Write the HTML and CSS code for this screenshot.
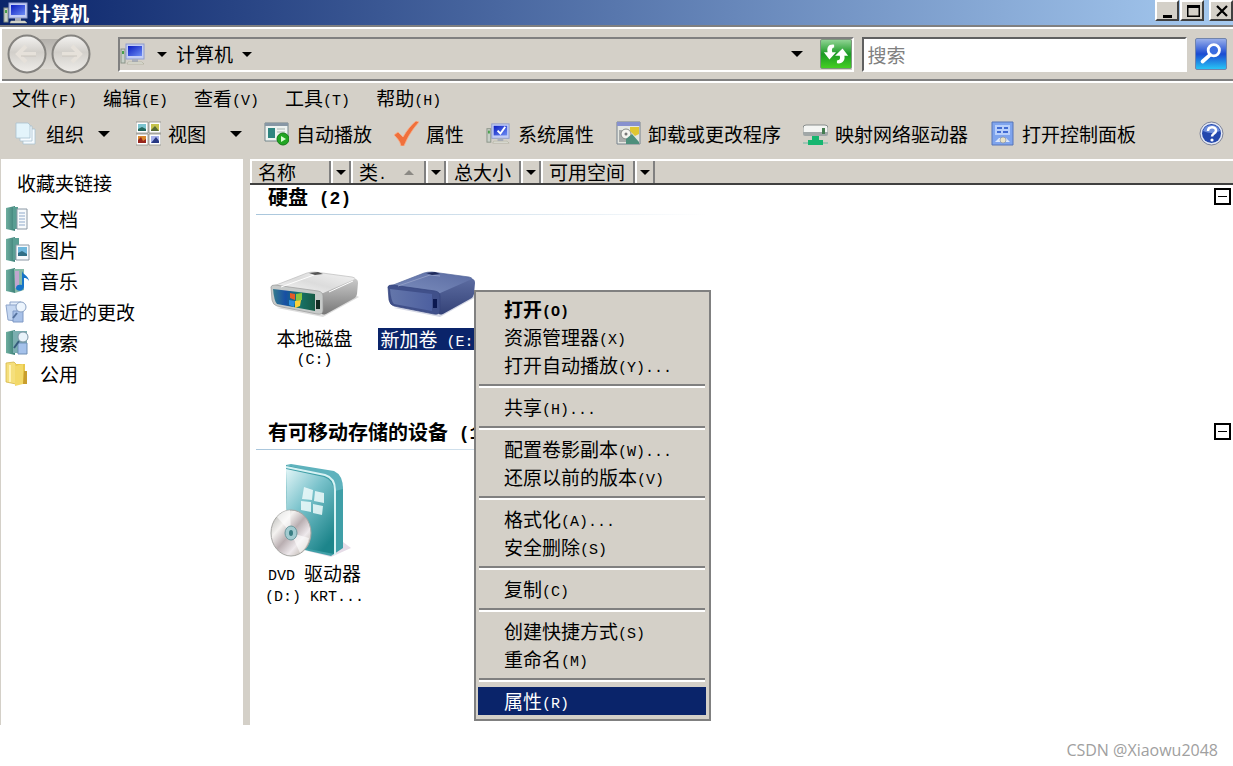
FILE: index.html
```html
<!DOCTYPE html>
<html lang="zh-CN">
<head>
    <meta charset="UTF-8">
    <meta name="viewport" content="width=device-width, initial-scale=1.0">
    <title>计算机</title>
    <link rel="stylesheet" href="styles.css">
</head>
<body>
    <svg class="defs" width="0" height="0" aria-hidden="true">
        <defs>
            <linearGradient id="screen" x1="0" y1="0" x2="1" y2="1">
                <stop offset="0" stop-color="#0a1cc0"/>
                <stop offset="1" stop-color="#6c8cf4"/>
            </linearGradient>
            <linearGradient id="book" x1="0" y1="0" x2="1" y2="0">
                <stop offset="0" stop-color="#6fae9f"/>
                <stop offset="1" stop-color="#3c8078"/>
            </linearGradient>
            <linearGradient id="ball" x1="0" y1="0" x2="0" y2="1">
                <stop offset="0" stop-color="#f4f3f1"/>
                <stop offset="0.45" stop-color="#d2cfca"/>
                <stop offset="1" stop-color="#efedea"/>
            </linearGradient>
        </defs>
        <symbol id="computer" viewBox="0 0 26 24">
            <rect x="1" y="7" width="4" height="14" fill="#c8d0c8" stroke="#8a9488"/>
            <rect x="2" y="9" width="2" height="3" fill="#49a04c"/>
            <rect x="6" y="2" width="18" height="15" fill="#c3cdf5" stroke="#8f9ccb"/>
            <rect x="8" y="4" width="14" height="10" fill="url(#screen)"/>
            <path d="M12 17h6v3h-6z" fill="#a7adbc"/>
            <path d="M8 20h14l2 2H7z" fill="#e4e6df" stroke="#a8a894" stroke-width=".6"/>
        </symbol>
        <symbol id="arrow" viewBox="0 0 12 6">
            <path d="M0 0h12L6 6z" fill="#000"/>
        </symbol>
    </svg>

    <div class="window">
        <div class="titlebar">
            <svg class="title-icon" viewBox="0 0 26 24"><use href="#computer"/></svg>
            <h1>计算机</h1>
            <div class="title-buttons">
                <button aria-label="最小化"><svg viewBox="0 0 16 16"><path d="M3 12h9v3H3z"/></svg></button>
                <button aria-label="最大化"><svg viewBox="0 0 16 16"><path d="M2 2h13v12H2zM3.500 5v7.500h10V5z" fill-rule="evenodd"/></svg></button>
                <button class="close" aria-label="关闭"><svg viewBox="0 0 16 16"><path d="M3 3l10 10M13 3L3 13" stroke="#000" stroke-width="2.200"/></svg></button>
            </div>
        </div>

        <div class="navbar">
            <div class="history">
                <button aria-label="后退"><svg viewBox="0 0 40 40"><circle cx="20" cy="20" r="18.500" fill="url(#ball)" stroke="#85837f" stroke-width="2"/><path d="M29 20H12M19 12l-8 8 8 8" fill="none" stroke="#e6e1da" stroke-width="4"/><path d="M29 22H14" stroke="#c9c4bd"/></svg></button>
                <button aria-label="前进"><svg viewBox="0 0 40 40"><circle cx="20" cy="20" r="18.500" fill="url(#ball)" stroke="#85837f" stroke-width="2"/><path d="M11 20h17M21 12l8 8-8 8" fill="none" stroke="#e6e1da" stroke-width="4"/><path d="M11 22h15" stroke="#c9c4bd"/></svg></button>
            </div>
            <div class="address">
                <svg class="small-icon" viewBox="0 0 26 24"><use href="#computer"/></svg>
                <svg class="tiny-arrow"><use href="#arrow"/></svg>
                <span>计算机</span>
                <svg class="tiny-arrow"><use href="#arrow"/></svg>
                <svg class="arrow address-drop"><use href="#arrow"/></svg>
                <button class="refresh" aria-label="刷新">
                    <svg viewBox="0 0 32 30">
                        <path d="M14 5C8 4 6 8 7 13H3l6 8 7-8h-4c-1-3 0-5 2-5z" fill="#fff"/>
                        <path d="M17 25c6 1 9-3 8-8h4l-6-8-8 8h5c1 3 0 5-3 5z" fill="#fff"/>
                    </svg>
                </button>
            </div>
            <input class="search" type="text" placeholder="搜索" aria-label="搜索">
            <button class="go" aria-label="开始搜索">
                <svg viewBox="0 0 32 32"><circle cx="19" cy="12" r="6" fill="#3b6de0" stroke="#fff" stroke-width="3"/><path d="M15 17l-8 7" stroke="#fff" stroke-width="4" stroke-linecap="round"/></svg>
            </button>
        </div>

        <div class="menubar">
            <button>文件<span class="en">(F)</span></button>
            <button>编辑<span class="en">(E)</span></button>
            <button>查看<span class="en">(V)</span></button>
            <button>工具<span class="en">(T)</span></button>
            <button>帮助<span class="en">(H)</span></button>
        </div>

        <div class="toolbar">
            <button>
                <svg class="icon" viewBox="0 0 25 25"><g fill="#f5fbff" stroke="#a9c3d0" stroke-width=".8"><path d="M9 8h12v15H9z"/><path d="M6 5h12v15H6z"/><path d="M2 2h12l2 2v13H2z" fill="#e3f4fb"/></g></svg>
                组织
                <svg class="arrow"><use href="#arrow"/></svg>
            </button>
            <button class="views">
                <svg class="icon" viewBox="0 0 25 25"><path d="M0 1h12v11H0zM13 1h12v11H13zM0 13h12v11H0zM13 13h12v11H13z" fill="#fff" stroke="#8d8d86" stroke-width=".8"/><path d="M2 3h8v7H2z" fill="#7cc4cf"/><path d="M2 8l4-2 4 2v2H2z" fill="#24685c"/><path d="M15 3h8v7h-8z" fill="#c5c34c"/><path d="M15 9l4-4 4 5h-8z" fill="#566a34"/><path d="M2 15h8v7H2z" fill="#d9892f"/><path d="M2 19l3-3 2 4 3-2v4H2z" fill="#97261d"/><path d="M15 15h8v7h-8z" fill="#a8b2ea"/><path d="M15 22l5-6 3 4v2z" fill="#283883"/></svg>
                视图
                <svg class="arrow"><use href="#arrow"/></svg>
            </button>
            <button>
                <svg class="icon" viewBox="0 0 25 25"><path d="M1 2h23v18H1z" fill="#eef3f1" stroke="#72858a"/><path d="M1 2h23v3H1z" fill="#8797a5"/><path d="M4 7h7v10H4z" fill="#2f8580"/><path d="M13 8h8M13 11h8" stroke="#a8b5b0"/><circle cx="19" cy="18" r="6" fill="#21a522" stroke="#137a17"/><path d="M17 15l5 3-5 3z" fill="#d8ffd0"/></svg>
                自动播放
            </button>
            <button>
                <svg class="icon" viewBox="0 0 25 25"><path d="M0 14l4-3 5 5C13 9 17 4 22 0l3 1C19 8 14 15 10 25H7C6 20 3 17 0 14z" fill="#f0703c" stroke="#f8b08c" stroke-width=".8"/></svg>
                属性
            </button>
            <button>
                <svg class="icon" viewBox="0 0 26 24"><use href="#computer"/><path d="M12 9l3 3 5-7" fill="none" stroke="#fff" stroke-width="2"/></svg>
                系统属性
            </button>
            <button>
                <svg class="icon" viewBox="0 0 25 25"><path d="M1 1h23v22H1z" fill="#e5e7e1" stroke="#76828d"/><path d="M1 1h23v4H1z" fill="#8791ce"/><path d="M3 9h9v12H3z" fill="#a9acab"/><circle cx="10" cy="13" r="5" fill="#f4f4ef" stroke="#868a86"/><circle cx="10" cy="13" r="1.500" fill="#777"/><path d="M14 6h9v7l-4 2-5-5z" fill="#dfc632"/><path d="M10 18l6-5 7 8v2H10z" fill="#4e8f7c"/></svg>
                卸载或更改程序
            </button>
            <button>
                <svg class="icon" viewBox="0 0 25 25"><path d="M0 7q0-3 3-3h19q3 0 3 3v5H0z" fill="#f4f5f3" stroke="#888d8c"/><path d="M0 11h25v2q0 2-2 2H2q-2 0-2-2z" fill="#a1a7a7"/><path d="M19 7h3v6h-3z" fill="#447d50"/><path d="M9 15h7v4h4v5H5v-5h4z" fill="#16b670"/><path d="M0 22h5M20 22h5" stroke="#9fc4b4" stroke-width="2"/></svg>
                映射网络驱动器
            </button>
            <button>
                <svg class="icon" viewBox="0 0 25 25"><path d="M2 1h21v23H2z" fill="#7fa4ed" stroke="#5675b8"/><path d="M5 4h15v10H5z" fill="#b9d0fb"/><path d="M7 6h5v2H7zM14 6h4v2h-4zM7 10h4v2H7zM13 10h5v2h-5z" fill="#416bd2"/><path d="M5 21l4-4h7l4 4z" fill="#dce7fb"/><circle cx="13" cy="19" r="3" fill="#e9e3c6" stroke="#8790a3" stroke-width=".7"/></svg>
                打开控制面板
            </button>
            <button class="help" aria-label="帮助">
                <svg class="icon" viewBox="0 0 25 25"><circle cx="12.500" cy="12.500" r="11.500" fill="#e3e8f5" stroke="#7c8298"/><circle cx="12.500" cy="12.500" r="9.500" fill="#2448ad"/><path d="M4 10a9 9 0 0 1 17 0q-8 4-17 0z" fill="#6f8fdc"/><path d="M9 10c0-5 8-5 8-.5 0 3-4 3-4 6" fill="none" stroke="#fff" stroke-width="2.500"/><circle cx="13" cy="19" r="1.600" fill="#fff"/></svg>
            </button>
        </div>

        <div class="content">
            <div class="sidebar">
                <h2>收藏夹链接</h2>
                <a href="#"><svg class="icon" viewBox="0 0 25 25"><path d="M1 2l9-2v25l-9-2z" fill="url(#book)"/><path d="M8 1h5v22H8z" fill="#599e93"/><path d="M12 3h10v20H12z" fill="#f7fafc" stroke="#8b98a4"/><path d="M14 7h6M14 10h6M14 13h6M14 16h6M14 19h6" stroke="#8fa9ca"/></svg>文档</a>
                <a href="#"><svg class="icon" viewBox="0 0 25 25"><path d="M1 2l9-2v25l-9-2z" fill="url(#book)"/><path d="M8 1h6v22H8z" fill="#599e93"/><path d="M11 8h13v15H11z" fill="#f7fafc" stroke="#8b98a4"/><path d="M13 10h9v9h-9z" fill="#6fb7dc"/><path d="M13 16l4-2 5 3v2h-9z" fill="#316f86"/></svg>图片</a>
                <a href="#"><svg class="icon" viewBox="0 0 25 25"><path d="M1 2l9-2v25l-9-2z" fill="url(#book)"/><path d="M9 1h10v21l-9 3z" fill="#87b9a7"/><path d="M10 3h4v17h-4z" fill="#c0a6ce"/><path d="M17 3c1 4 6 4 7 10-2-3-3-3-5-3v8c0 6-8 6-8 2 0-3 3-4 6-3z" fill="#1674c8"/></svg>音乐</a>
                <a href="#"><svg class="icon" viewBox="0 0 25 25"><path d="M5 3h11v16H5z" fill="#e4eefb" stroke="#8da4ca"/><path d="M1 6h11v16l-9-1z" fill="#c5d7f1" stroke="#8da4ca"/><path d="M8 12h10v11H8z" fill="#a8c1e8" stroke="#7f98c5"/><circle cx="16" cy="8" r="5" fill="#edf5fd" stroke="#8ba2c4"/><path d="M12 14l-4 5" stroke="#54719e" stroke-width="2"/></svg>最近的更改</a>
                <a href="#"><svg class="icon" viewBox="0 0 25 25"><path d="M1 2l9-2v25l-9-2z" fill="url(#book)"/><path d="M8 1h14v22H8z" fill="#7baeb0"/><path d="M13 13h9v11h-9z" fill="#a5c2eb" stroke="#6f8fb5"/><circle cx="18" cy="7" r="5" fill="#e9f3fa" stroke="#7d95a6"/><path d="M14 11l-5 7" stroke="#365b7c" stroke-width="2"/></svg>搜索</a>
                <a href="#"><svg class="icon" viewBox="0 0 25 25"><path d="M1 2l8-1 2 2v20l-10-2z" fill="#f5df7c" stroke="#d6b84a" stroke-width=".8"/><path d="M11 3h9v20h-9z" fill="#e8c84c"/><path d="M10 5l8-2v20l-8 2z" fill="#f3d969"/><path d="M19 10h3v13h-4z" fill="#c99e2d"/><path d="M5 4v17" stroke="#fff3b5" stroke-width="2"/></svg>公用</a>
            </div>

            <div class="main">
                <div class="columns">
                    <button class="col col-name">名称</button>
                    <button class="col-drop" aria-label="名称筛选"><svg><use href="#arrow"/></svg></button>
                    <button class="col col-type"><span>类<span class="en">.</span></span><svg viewBox="0 0 12 6"><path d="M0 6h12L6 0z" fill="#8b8984"/></svg></button>
                    <button class="col-drop" aria-label="类型筛选"><svg><use href="#arrow"/></svg></button>
                    <button class="col col-size">总大小</button>
                    <button class="col-drop" aria-label="总大小筛选"><svg><use href="#arrow"/></svg></button>
                    <button class="col col-free">可用空间</button>
                    <button class="col-drop" aria-label="可用空间筛选"><svg><use href="#arrow"/></svg></button>
                </div>

                <div class="group">
                    <div class="group-title">
                        <h3>硬盘<span class="en"> (2)</span></h3>
                        <button class="toggle" aria-label="折叠"></button>
                    </div>
                    <div class="drives disks">
                        <div class="drive">
                            <svg class="disk" viewBox="0 0 92 50">
                                <defs>
                                    <linearGradient id="top1" x1="0" y1="1" x2="1" y2="0"><stop offset="0" stop-color="#fafafa"/><stop offset=".5" stop-color="#dcdcdc"/><stop offset="1" stop-color="#f4f4f4"/></linearGradient>
                                    <linearGradient id="side1" x1="0" y1="0" x2="0" y2="1"><stop offset="0" stop-color="#c9c9c9"/><stop offset="1" stop-color="#777"/></linearGradient>
                                    <linearGradient id="face1" x1="0" y1="0" x2="1" y2="0"><stop offset="0" stop-color="#337a8c"/><stop offset=".3" stop-color="#174fa4"/><stop offset=".6" stop-color="#16756c"/><stop offset="1" stop-color="#175b45"/></linearGradient>
                                </defs>
                                <path d="M8 38l46 9 36-20-8-4z" fill="#ddd"/>
                                <path d="M2 17L38 3q3-1 8-1l37 5q5 1 3 5L54 24 4 20z" fill="url(#top1)" stroke="#bbb" stroke-width=".7"/>
                                <path d="M52 24L86 9q3 0 3 4l-1 11q-1 4-4 5L57 44q-5 2-5-3z" fill="url(#side1)"/>
                                <path d="M2 17q0-2 4-2l43 6q5 1 5 5v14q0 5-6 4L8 36q-4-1-5-6z" fill="#c7cac9" stroke="#999" stroke-width=".7"/>
                                <path d="M4 19l42 5v17L8 34q-3-3-4-15z" fill="url(#face1)"/>
                                <path d="M21 23l5 1v6l-5-2z" fill="#e45a28"/><path d="M27 24l6-1v7l-6 1z" fill="#8bc53f"/><path d="M20 30l6 1-1 6-5-2z" fill="#2c8edc"/><path d="M26 31l6-1-1 6-5 2z" fill="#fbd23a"/>
                                <path d="M47 30h4v9h-4z" fill="#142b22"/>
                                <path d="M12 17L45 5M60 22l24-11" stroke="#fff" stroke-width="1"/>
                                <path d="M40 3l9-1 5 2-8 1z" fill="#555"/>
                            </svg>
                            <span class="label">本地磁盘<br><span class="en">(C:)</span></span>
                        </div>
                        <div class="drive selected">
                            <svg class="disk" viewBox="0 0 92 50">
                                <defs>
                                    <linearGradient id="top2" x1="0" y1="1" x2="1" y2="0"><stop offset="0" stop-color="#7d8fbe"/><stop offset="1" stop-color="#5a6ba2"/></linearGradient>
                                    <linearGradient id="side2" x1="0" y1="0" x2="0" y2="1"><stop offset="0" stop-color="#5b6ba0"/><stop offset="1" stop-color="#344277"/></linearGradient>
                                    <linearGradient id="face2" x1="0" y1="0" x2="1" y2="0"><stop offset="0" stop-color="#6476aa"/><stop offset="1" stop-color="#4d60a0"/></linearGradient>
                                </defs>
                                <path d="M8 38l46 9 36-20-8-4z" fill="#d5d8e5"/>
                                <path d="M2 17L38 3q3-1 8-1l37 5q5 1 3 5L54 24 4 20z" fill="url(#top2)" stroke="#53659a" stroke-width=".7"/>
                                <path d="M52 24L86 9q3 0 3 4l-1 11q-1 4-4 5L57 44q-5 2-5-3z" fill="url(#side2)"/>
                                <path d="M2 17q0-2 4-2l43 6q5 1 5 5v14q0 5-6 4L8 36q-4-1-5-6z" fill="#40508a" stroke="#34447c" stroke-width=".7"/>
                                <path d="M4 19l42 5v17L8 34q-3-3-4-15z" fill="url(#face2)"/>
                                <path d="M47 29h4v9h-4z" fill="#0b1850"/>
                                <path d="M12 16L44 5l10 1" fill="none" stroke="#8f9cc5" stroke-width="1"/>
                                <path d="M40 3l9-1 5 2-8 1z" fill="#1f2b5c"/>
                            </svg>
                            <span class="label">新加卷<span class="en"> (E:)</span></span>
                        </div>
                    </div>
                </div>

                <div class="group">
                    <div class="group-title">
                        <h3>有可移动存储的设备<span class="en"> (1)</span></h3>
                        <button class="toggle" aria-label="折叠"></button>
                    </div>
                    <div class="drives">
                        <div class="drive">
                            <svg class="dvd" viewBox="0 0 92 96">
                                <defs>
                                    <linearGradient id="box" x1="0" y1="0" x2=".7" y2="1"><stop offset="0" stop-color="#e2f5f7"/><stop offset=".45" stop-color="#79c2cb"/><stop offset="1" stop-color="#1d858b"/></linearGradient>
                                    <linearGradient id="disc" x1="0" y1="0" x2="1" y2="1"><stop offset="0" stop-color="#a8aaa6"/><stop offset=".3" stop-color="#f4f2f0"/><stop offset=".5" stop-color="#b9aeb1"/><stop offset=".7" stop-color="#eee9ec"/><stop offset="1" stop-color="#a59c8c"/></linearGradient>
                                </defs>
                                <path d="M38 88l24 6 20-9-8-6z" fill="#e6dce7"/>
                                <path d="M17 2l45 8q10 3 12 16v59l-12 8-44-10z" fill="#3f9fa7"/>
                                <path d="M17 2l5-1 43 7q9 4 9 18l-8 2Q65 15 56 12z" fill="#5eb2bd"/>
                                <path d="M17 6l38 8q9 3 10 14v63l-46-9z" fill="url(#box)"/>
                                <path d="M17 4l39 8q10 3 10 15v65" fill="none" stroke="#d7f2f4" stroke-width="2"/>
                                <path d="M35 24l9 3-1 10-10-1zM46 28l9 2v10l-10-2zM32 38l10 1v10l-10-2zM44 41l10 2-1 9-9-2z" fill="#eefafa" opacity=".85"/>
                                <ellipse cx="22" cy="70" rx="20" ry="23" fill="url(#disc)" stroke="#a5a5a2"/>
                                <path d="M22 70L8 54q6-7 13-7zM22 70l18 5q-2 10-9 15z" fill="#fff" opacity=".6"/>
                                <ellipse cx="22" cy="70" rx="6" ry="7" fill="#a3cbd0" stroke="#6c999e"/>
                                <ellipse cx="22" cy="70" rx="2" ry="3" fill="#387d82"/>
                            </svg>
                            <span class="label"><span class="en">DVD </span>驱动器<br><span class="en">(D:) KRT...</span></span>
                        </div>
                    </div>
                </div>
            </div>
        </div>

        <div class="context-menu">
            <button class="default">打开<span class="en">(O)</span></button>
            <button>资源管理器<span class="en">(X)</span></button>
            <button>打开自动播放<span class="en">(Y)...</span></button>
            <hr>
            <button>共享<span class="en">(H)...</span></button>
            <hr>
            <button>配置卷影副本<span class="en">(W)...</span></button>
            <button>还原以前的版本<span class="en">(V)</span></button>
            <hr>
            <button>格式化<span class="en">(A)...</span></button>
            <button>安全删除<span class="en">(S)</span></button>
            <hr>
            <button>复制<span class="en">(C)</span></button>
            <hr>
            <button>创建快捷方式<span class="en">(S)</span></button>
            <button>重命名<span class="en">(M)</span></button>
            <hr>
            <button class="active">属性<span class="en">(R)</span></button>
        </div>
    </div>

    <div class="watermark">CSDN @Xiaowu2048</div>
</body>
</html>
```
FILE: styles.css
```css
* {
    box-sizing: border-box;
}
body {
    margin: 0;
    background: #fff;
    color: #000;
    font-family: "Noto Sans CJK SC", sans-serif;
    font-size: 19px;
    line-height: 24px;
}
h1, h2, h3 {
    margin: 0;
    font-size: 19px;
}
button {
    margin: 0;
    padding: 0;
    border: 0;
    background: none;
    color: inherit;
    font: inherit;
    white-space: nowrap;
}
svg {
    display: block;
    flex: none;
}
.defs {
    position: absolute;
}
.en {
    font-family: "Liberation Mono", monospace;
    font-size: 15px;
    line-height: 1;
    vertical-align: 1px;
    white-space: pre;
}
.arrow {
    width: 12px;
    height: 6px;
}
.tiny-arrow {
    width: 10px;
    height: 5px;
}
.icon {
    width: 25px;
    height: 25px;
}
.window {
    position: relative;
    background: #d4d0c8;
}

/* Barre de titre */
.titlebar {
    display: flex;
    align-items: center;
    height: 25px;
    padding-left: 3px;
    background: linear-gradient(to right, #0a246a, #a6caf0);
    color: #fff;
}
.title-icon {
    width: 26px;
    height: 24px;
}
.titlebar h1 {
    flex: 1;
    margin-left: 3px;
    line-height: 24px;
}
.title-buttons {
    display: flex;
    align-self: flex-start;
    gap: 1px;
}
.title-buttons button {
    width: 24px;
    height: 21px;
    padding: 1px 3px;
    background: #d4d0c8;
    border: 2px solid #404040;
    border-top-color: #fff;
    border-left-color: #fff;
}
.title-buttons svg {
    width: 16px;
    height: 16px;
}
.title-buttons .close {
    margin-left: 4px;
}

/* Barre d'adresse */
.navbar {
    display: flex;
    align-items: center;
    height: 58px;
    padding: 0 6px 0 7px;
    border-top: 2px solid #808080;
    border-bottom: 2px solid #fff;
    box-shadow: inset 0 2px #fff, inset 2px 0 #fff, inset 0 -2px #808080;
}
.history {
    display: flex;
    gap: 4px;
    margin-right: 27px;
    background: linear-gradient(#b5b2ad, #dedbd5) no-repeat center / 34px 30px;
}
.history svg {
    width: 40px;
    height: 40px;
}
.address {
    display: flex;
    flex: 7;
    align-items: center;
    height: 35px;
    margin-right: 8px;
    border: 2px solid #fff;
    border-top-color: #808080;
    border-left-color: #808080;
}
.small-icon {
    width: 26px;
    height: 24px;
    margin-right: 11px;
}
.address span {
    margin: 0 9px;
    line-height: 24px;
}
.address-drop {
    margin-left: auto;
    margin-right: 17px;
}
.refresh {
    width: 32px;
    height: 30px;
    border: 1px solid #7d967d;
    border-radius: 2px;
    background: linear-gradient(#8fd393, #1b9a25 50%, #44cf22);
}
.refresh svg {
    width: 30px;
    height: 28px;
}
.search {
    flex: 3;
    min-width: 0;
    height: 35px;
    margin-right: 8px;
    padding: 0 4px;
    border: 2px solid #fff;
    border-top-color: #606060;
    border-left-color: #606060;
    background: #fff;
    font: inherit;
}
.search::placeholder {
    color: #808080;
    opacity: 1;
}
.go {
    width: 32px;
    height: 32px;
    border: 1px solid #7184ab;
    border-radius: 2px;
    background: linear-gradient(#98aeea, #1b4bd2 50%, #28c4f5);
}
.go svg {
    width: 30px;
    height: 30px;
}

/* Menus et outils */
.menubar {
    display: flex;
    align-items: center;
    gap: 26px;
    height: 29px;
    padding: 0 12px;
}
.toolbar {
    display: flex;
    align-items: center;
    gap: 22px;
    height: 47px;
    padding: 0 9px 4px 14px;
}
.toolbar button {
    display: flex;
    align-items: center;
    gap: 7px;
}
.toolbar .arrow {
    margin-left: 7px;
    margin-right: 4px;
}
.toolbar .views .arrow {
    margin-left: 17px;
    margin-right: 0;
}
.toolbar .help {
    margin-left: auto;
}

/* Contenu */
.content {
    display: flex;
    min-height: 566px;
}
.sidebar {
    width: 243px;
    padding: 12px 4px;
    border-left: 1px solid #d4d0c8;
    background: #fff;
}
.sidebar h2 {
    margin: 0 0 8px 12px;
    font-weight: normal;
}
.sidebar a {
    display: flex;
    align-items: center;
    gap: 10px;
    height: 31px;
    color: #000;
    text-decoration: none;
}
.main {
    flex: 1;
    min-width: 0;
    margin-left: 7px;
    background: #fff;
}
.columns {
    display: flex;
    height: 26px;
    background: #d4d0c8;
    border-top: 2px solid #fff;
    border-bottom: 2px solid #404040;
}
.columns button {
    border-left: 2px solid #fff;
    border-right: 2px solid #808080;
    line-height: 22px;
}
.col {
    padding-left: 6px;
    text-align: left;
}
.col-name {
    width: 81px;
}
.col-type {
    display: flex;
    align-items: center;
    width: 75px;
}
.col-type svg {
    width: 10px;
    height: 5px;
    margin-left: auto;
    margin-right: 10px;
}
.col-size {
    width: 75px;
}
.col-free {
    width: 94px;
}
.col-drop {
    display: flex;
    align-items: center;
    justify-content: center;
    width: 20px;
}
.col-drop svg {
    width: 10px;
    height: 5px;
}
.group {
    height: 235px;
    padding-left: 6px;
}
.group-title {
    display: flex;
    justify-content: space-between;
    height: 30px;
    padding: 0 2px 0 12px;
    background: linear-gradient(to right, #a9c6dc, #fff 450px) no-repeat bottom / 100% 1px;
}
.group-title h3 {
    font-size: 20px;
}
.group-title .en {
    font-size: 18px;
}
.toggle {
    width: 17px;
    height: 17px;
    margin-top: 3px;
    border: 2px solid #000;
    background: linear-gradient(#000, #000) no-repeat center / 9px 1px;
}
.drives {
    display: flex;
    padding-top: 13px;
}
.disks {
    padding-top: 55px;
}
.drive {
    display: flex;
    flex-direction: column;
    align-items: center;
    width: 117px;
    text-align: center;
    white-space: nowrap;
}
.disk {
    width: 92px;
    height: 50px;
    margin-bottom: 8px;
}
.dvd {
    width: 92px;
    height: 96px;
    margin-bottom: 4px;
}
.label {
    padding: 0 2px;
    line-height: 19px;
}
.selected .label {
    background: #0a246a;
    color: #fff;
    line-height: 22px;
}

/* Menu contextuel */
.context-menu {
    position: absolute;
    top: 290px;
    left: 474px;
    width: 237px;
    padding: 3px 3px 4px 2px;
    background: #d4d0c8;
    border: 2px solid #808080;
}
.context-menu button {
    display: block;
    width: 100%;
    height: 28px;
    padding-left: 26px;
    line-height: 28px;
    text-align: left;
}
.context-menu .default {
    font-weight: bold;
}
.context-menu .active {
    background: #0a246a;
    color: #fff;
}
.context-menu hr {
    height: 4px;
    margin: 5px 1px;
    border: 0;
    border-top: 2px solid #808080;
    border-bottom: 2px solid #fff;
}
.watermark {
    padding: 13px 15px 0 0;
    color: #a0a0a0;
    font-family: "Open Sans", sans-serif;
    font-size: 16px;
    text-align: right;
}
```
